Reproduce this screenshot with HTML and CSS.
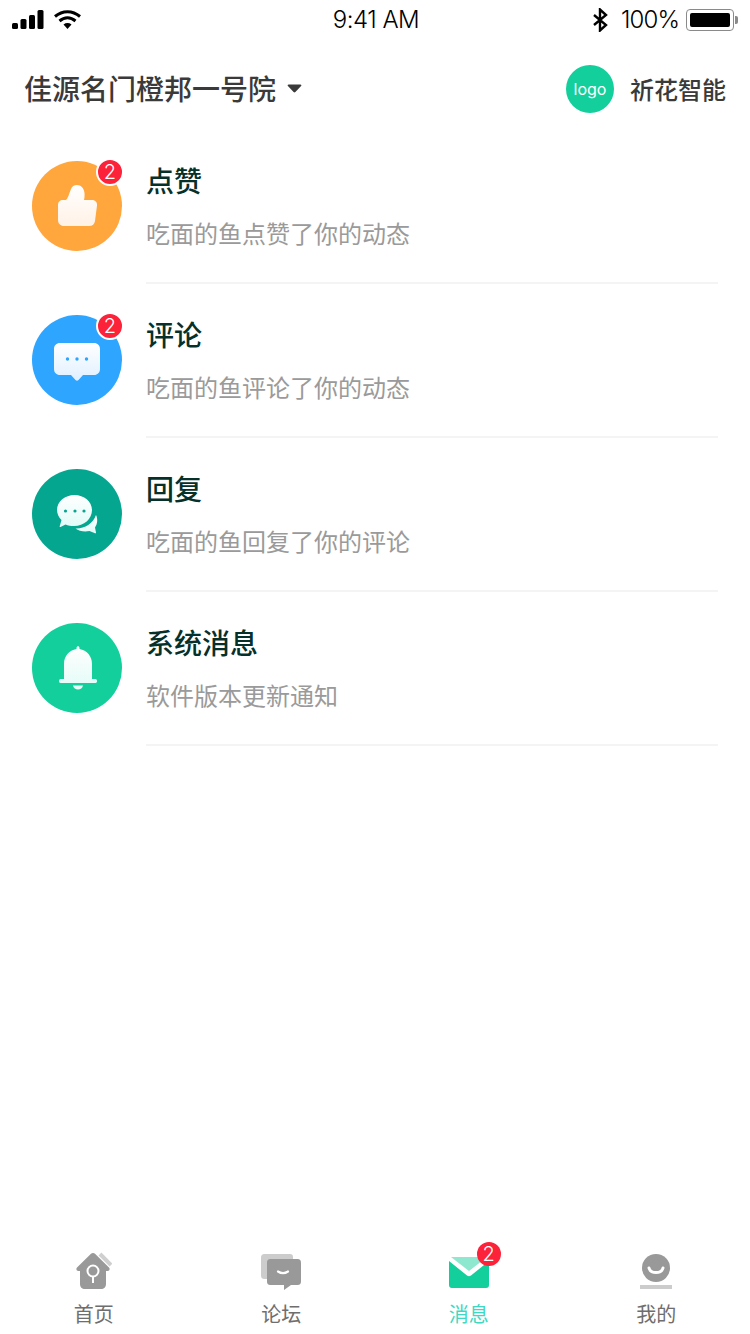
FILE: index.html
```html
<!DOCTYPE html>
<html lang="zh">
<head>
<meta charset="utf-8">
<title>消息</title>
<link rel="stylesheet" href="styles.css">
</head>
<body>
<div class="page">
  <div class="status">
    <div class="status-side">
      <svg class="sig" width="36" height="20" viewBox="0 0 36 20"><rect x="0" y="13" width="6" height="6" rx="1.5"/><rect x="8.5" y="9" width="6" height="10" rx="1.5"/><rect x="17" y="5" width="6" height="14" rx="1.5"/><rect x="25.5" y="0" width="6" height="19" rx="1.5"/></svg>
      <svg class="wifi" width="28" height="20" viewBox="0 0 28 20"><path d="M1 6.5C8.500 0 18.500 0 26 6.500" fill="none" stroke="#000" stroke-width="3"/><path d="M5.500 11C10.500 6.800 16.500 6.800 21.500 11" fill="none" stroke="#000" stroke-width="3"/><path d="M9.500 14.500C12 12.600 15 12.600 17.500 14.500L13.500 19Z"/></svg>
    </div>
    <div class="time">9:41 AM</div>
    <div class="status-side status-right">
      <svg class="bt" width="16" height="24" viewBox="0 0 16 24"><path d="M2 7L14 17L8 22.500V1.500L14 7L2 17" fill="none" stroke="#000" stroke-width="2.400"/></svg>
      <span class="pct">100%</span>
      <div class="batt"><div class="batt-fill"></div></div>
      <div class="batt-tip"></div>
    </div>
  </div>

  <header class="head">
    <div class="community"><span>佳源名门橙邦一号院</span><svg width="15" height="9" viewBox="0 0 16 10"><path d="M1.500 0.500H14.500C15.500 0.500 16 1.500 15.300 2.300L9 9C8.400 9.600 7.600 9.600 7 9L0.700 2.300C0 1.500 0.500 0.500 1.500 0.500Z" fill="#3a3a3a"/></svg></div>
    <div class="org"><div class="logo">logo</div><span class="org-name">祈花智能</span></div>
  </header>

  <main class="list">
    <div class="row">
      <div class="ico ico-orange">
        <svg class="glyph-thumb" width="42" height="42" viewBox="0 0 42 42"><defs><linearGradient id="g1" x1="0" y1="0" x2="0" y2="1"><stop offset="0" stop-color="#fff"/><stop offset="1" stop-color="#fff2e6"/></linearGradient></defs><path d="M6 15H9C11 13 12 9 14 4C15 1.500 17 0 20 0C24 0 27 3 27.500 8C27.700 11 27.500 13 27 15H35C38.500 15 40.500 17.500 40 20.500L38 36C37.500 39 35.500 41 32 41H7C3.500 41 1 38.500 1 35V20C1 17 3 15 6 15Z" fill="url(#g1)"/></svg>
        <span class="badge">2</span>
      </div>
      <div class="body"><div class="title">点赞</div><div class="sub">吃面的鱼点赞了你的动态</div></div>
    </div>
    <div class="row">
      <div class="ico ico-blue">
        <svg class="glyph-bubble" width="46" height="40" viewBox="0 0 46 40"><defs><linearGradient id="g2" x1="0" y1="0" x2="0" y2="1"><stop offset="0" stop-color="#fff"/><stop offset="1" stop-color="#e0f0ff"/></linearGradient></defs><path d="M6 0H40C43.500 0 46 2.500 46 6V26C46 29.500 43.500 32 40 32H29L24.500 37C23.500 38 22.500 38 21.500 37L17 32H6C2.500 32 0 29.500 0 26V6C0 2.500 2.500 0 6 0Z" fill="url(#g2)"/><circle cx="13.500" cy="16" r="1.700" fill="#2ea5ff"/><circle cx="23" cy="16" r="1.700" fill="#2ea5ff"/><circle cx="32.500" cy="16" r="1.700" fill="#2ea5ff"/></svg>
        <span class="badge">2</span>
      </div>
      <div class="body"><div class="title">评论</div><div class="sub">吃面的鱼评论了你的动态</div></div>
    </div>
    <div class="row">
      <div class="ico ico-teal">
        <svg class="glyph-reply" width="42" height="42" viewBox="0 0 42 42"><defs><linearGradient id="g3" x1="0" y1="0" x2="0" y2="1"><stop offset="0" stop-color="#fff"/><stop offset="1" stop-color="#e0fbf8"/></linearGradient></defs><path d="M17.500 0C27 0 35 6.500 35 15C35 24 27 31 17 31C14 31 11 30.500 8.500 29.500L3.500 32C3 32.300 2.500 32 2.700 31.200L4.500 25C1.500 22 0 18.500 0 15C0 6.500 8 0 17.500 0Z" fill="url(#g3)"/><circle cx="8.500" cy="16" r="1.600" fill="#05a690"/><circle cx="18" cy="16" r="1.600" fill="#05a690"/><circle cx="27" cy="16" r="1.600" fill="#05a690"/><path d="M39 20C41 24 40.500 29 38 32.500L39 37.500C39.200 38.300 38.800 38.500 38 38.200L32.500 36C27 37 22 36 18.500 33.500C27 34 36 29 39 20Z" fill="url(#g3)"/></svg>
      </div>
      <div class="body"><div class="title">回复</div><div class="sub">吃面的鱼回复了你的评论</div></div>
    </div>
    <div class="row">
      <div class="ico ico-green">
        <svg class="glyph-bell" width="38" height="44" viewBox="0 0 38 44"><defs><linearGradient id="g4" x1="0" y1="0" x2="0" y2="1"><stop offset="0" stop-color="#fff"/><stop offset="1" stop-color="#e6fcf8"/></linearGradient></defs><path d="M17.500 3V2C17.500 -0.300 20.500 -0.300 20.500 2V3C28 4.500 33 10 33 18V33H36.500C38.500 33 38.500 37 36.500 37H1.500C-0.500 37 -0.500 33 1.500 33H5V18C5 10 10 4.500 17.500 3Z" fill="url(#g4)"/><path d="M14 39.500H24C23.500 42 21.500 43.500 19 43.500C16.500 43.500 14.500 42 14 39.500Z" fill="#e6fcf8"/></svg>
      </div>
      <div class="body"><div class="title">系统消息</div><div class="sub">软件版本更新通知</div></div>
    </div>
  </main>

  <nav class="tabs">
    <div class="tab">
      <svg class="glyph-home" width="38" height="38" viewBox="0 0 38 38"><path d="M26 2L37 13" stroke="#cfcfcf" stroke-width="4" fill="none"/><path d="M17 1.800C18 0.800 20 0.800 21 1.800L35 15.500C36.300 16.800 35.500 19 33.500 19H32V32C32 35 30 37 27 37H11C8 37 6 35 6 32V19H4.500C2.500 19 1.700 16.800 3 15.500Z" fill="#999"/><circle cx="19" cy="19" r="5.500" fill="none" stroke="#fff" stroke-width="2"/><path d="M19 24.500V31" stroke="#fff" stroke-width="2"/></svg>
      <span>首页</span>
    </div>
    <div class="tab">
      <svg width="42" height="38" viewBox="0 0 42 38"><path d="M5 2H30C32 2 33 3 33 5V27H5C2 27 1 26 1 23V6C1 3 2 2 5 2Z" fill="#ccc"/><path d="M11 7H37C40 7 41 8 41 11V29C41 32 40 33 37 33H31L24 38V33H11C8 33 7 32 7 29V11C7 8 8 7 11 7Z" fill="#999"/><path d="M18 19.500C21 21.500 25 21.500 28 19.500" stroke="#fff" stroke-width="2.200" fill="none" stroke-linecap="round"/></svg>
      <span>论坛</span>
    </div>
    <div class="tab tab-on">
      <div class="mail">
        <svg width="42" height="38" viewBox="0 0 42 38"><path d="M3 5H39L21 19Z" fill="#8de8cf"/><path d="M1 9L19 23.500C20.500 24.500 21.500 24.500 23 23.500L41 9V33C41 35 40 36 38 36H4C2 36 1 35 1 33Z" fill="#13cf9b"/></svg>
        <span class="badge badge-tab">2</span>
      </div>
      <span>消息</span>
    </div>
    <div class="tab">
      <svg width="34" height="38" viewBox="0 0 34 38"><circle cx="17" cy="16" r="14" fill="#999"/><path d="M10 16C11.500 22 22.500 22 24 16" stroke="#fff" stroke-width="3" fill="none" stroke-linecap="round"/><rect x="1" y="33" width="32" height="4" fill="#ccc"/></svg>
      <span>我的</span>
    </div>
  </nav>
</div>
</body>
</html>
```

FILE: styles.css
```css
* { box-sizing: border-box; }
html, body { margin: 0; padding: 0; background: #fff; }
body { font-family: "Noto Sans CJK SC", "Noto Sans", sans-serif; }
.page { width: 750px; height: 1334px; display: flex; flex-direction: column; overflow: hidden; }

.status { height: 40px; display: flex; align-items: center; justify-content: space-between; padding: 0 12px; color: #000; }
.status-side { display: flex; align-items: center; gap: 6px; width: 200px; }
.status-right { justify-content: flex-end; gap: 0; width: 200px; }
.sig { fill: #000; }
.wifi { fill: #000; margin-bottom: 1px; }
.time { font-family: Inter, "Liberation Sans", sans-serif; font-size: 24px; line-height: 40px; font-weight: 300; letter-spacing: -0.5px; margin-left: 2px; }
.bt { margin-right: 13px; }
.pct { font-family: Inter, "Liberation Sans", sans-serif; font-size: 24px; line-height: 40px; font-weight: 300; letter-spacing: -0.9px; margin-right: 7px; }
.batt { width: 48px; height: 22px; border: 1px solid #8a8a8a; border-radius: 4px; padding: 3px; }
.batt-fill { width: 100%; height: 100%; background: #000; border-radius: 2px; }
.batt-tip { width: 3px; height: 8px; background: #8a8a8a; border-radius: 0 2px 2px 0; margin-left: 1px; }

.head { height: 90px; display: flex; align-items: center; justify-content: space-between; padding: 8px 24px 0; flex: none; }
.community { display: flex; align-items: center; gap: 11px; font-size: 28px; font-weight: 500; color: #3a3a3a; margin-bottom: 2px; }
.org { display: flex; align-items: center; gap: 16px; font-size: 24px; font-weight: 500; color: #3a3a3a; }
.org-name { margin-bottom: 2px; }
.logo { width: 48px; height: 48px; border-radius: 50%; background: #13cf9b; color: #fff; display: flex; align-items: center; justify-content: center; font-family: Inter, "Noto Sans", sans-serif; font-size: 16px; font-weight: 400; }

.list { flex: 1; }
.row { height: 154px; display: flex; padding: 0 32px; }
.ico { width: 90px; height: 90px; border-radius: 50%; margin-top: 31px; flex: none; display: flex; align-items: center; justify-content: center; position: relative; }
.ico-orange { background: #ffa63d; }
.ico-blue { background: #2ea5ff; }
.ico-teal { background: #05a690; }
.ico-green { background: #13cf9b; }
.glyph-thumb { margin-left: 2px; }
.glyph-bubble { margin-top: 6px; }
.glyph-reply { margin-top: 4px; margin-left: 1px; }
.glyph-bell { margin-left: 1px; }
.glyph-home { margin-right: 2px; }
.badge { position: absolute; top: -3px; right: -2px; width: 28px; height: 28px; border-radius: 50%; background: #fb2239; border: 2px solid #fff; color: #fff; font-family: Inter, "Noto Sans", sans-serif; font-size: 20px; font-weight: 300; line-height: 24px; text-align: center; }
.body { flex: 1; margin-left: 24px; border-bottom: 2px solid #f4f4f4; display: flex; flex-direction: column; }
.title { margin-top: 30px; font-size: 28px; line-height: 40px; font-weight: 500; color: #06302a; }
.sub { margin-top: 15px; font-size: 24px; line-height: 36px; color: #9a9a9a; }

.tabs { height: 94px; display: flex; flex: none; }
.tab { flex: 1; display: flex; flex-direction: column; align-items: center; padding-top: 12px; font-size: 20px; line-height: 28px; color: #6e6e6e; gap: 10px; }
.tab-on { color: #3fd8c2; }
.mail { position: relative; height: 38px; }
.mail svg { display: block; }
.badge-tab { top: -10px; right: -11px; width: 24px; height: 24px; border: 0; line-height: 24px; font-size: 20px; }
```
